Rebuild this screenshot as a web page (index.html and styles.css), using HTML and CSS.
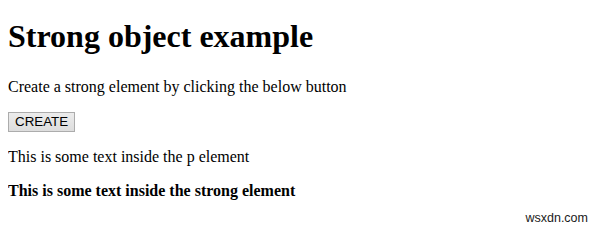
FILE: index.html
```html
<!DOCTYPE html>
<html lang="en">
<head>
    <meta charset="UTF-8">
    <title>Strong object example</title>
    <link rel="stylesheet" href="styles.css">
</head>
<body>
    <h1>Strong object example</h1>
    <p>Create a strong element by clicking the below button</p>
    <button class="btn">CREATE</button>
    <p>This is some text inside the p element</p>
    <p><strong>This is some text inside the strong element</strong></p>
    <div class="watermark">wsxdn.com</div>
</body>
</html>
```

FILE: styles.css
```css
body {
    margin: 8px;
    font-family: 'Liberation Serif', 'Times New Roman', serif;
    font-size: 16px;
    color: #000;
    background: #fff;
}
h1 {
    font-size: 2em;
    margin: 10px 0 23px;
}
p {
    margin: 16px 0;
}
.btn {
    font-family: 'Liberation Sans', Arial, sans-serif;
    font-size: 13.33px;
    color: #000;
    background: linear-gradient(#ececec, #dddddd);
    border: 1px solid #acacac;
    padding: 1px 6px 2px;
    border-radius: 0;
}
.watermark {
    position: absolute;
    right: 11px;
    bottom: 2px;
    font-family: 'Liberation Sans', Arial, sans-serif;
    font-size: 12.5px;
    color: #1a1a1a;
}
```
